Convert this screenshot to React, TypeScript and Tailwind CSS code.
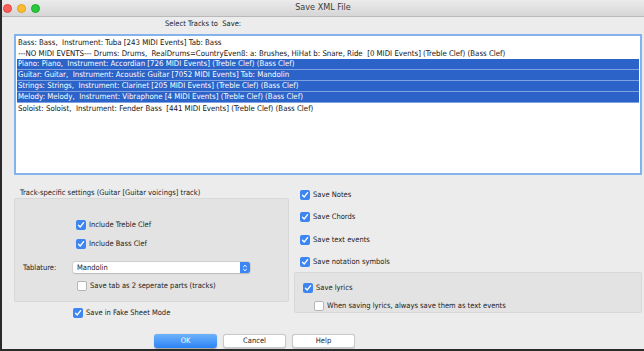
import React from "react"

const font = "font-['DejaVu_Sans_Condensed','Liberation_Sans',sans-serif]"

const rows = [
    { text: "Bass: Bass,  Instrument: Tuba [243 MIDI Events] Tab: Bass", sel: false },
    { text: "---NO MIDI EVENTS--- Drums: Drums,  RealDrums=CountryEven8: a: Brushes, HiHat b: Snare, Ride  [0 MIDI Events] (Treble Clef) (Bass Clef)", sel: false },
    { text: "Piano: Piano,  Instrument: Accordian [726 MIDI Events] (Treble Clef) (Bass Clef)", sel: true },
    { text: "Guitar: Guitar,  Instrument: Acoustic Guitar [7052 MIDI Events] Tab: Mandolin", sel: true },
    { text: "Strings: Strings,  Instrument: Clarinet [205 MIDI Events] (Treble Clef) (Bass Clef)", sel: true },
    { text: "Melody: Melody,  Instrument: Vibraphone [4 MIDI Events] (Treble Clef) (Bass Clef)", sel: true },
    { text: "Soloist: Soloist,  Instrument: Fender Bass  [441 MIDI Events] (Treble Clef) (Bass Clef)", sel: false },
]

const Check = ({ checked }: { checked: boolean }) => {
    if (!checked) {
        return <span className="w-[10px] h-[10px] rounded-[2px] bg-white border border-[#b5b5b5] shrink-0" />
    }
    return (
        <span className="w-[10px] h-[10px] rounded-[2px] bg-[#3d86f2] flex items-center justify-center shrink-0">
            <svg width="8" height="8" viewBox="0 0 8 8">
                <path d="M1.5 4.2 L3.2 6 L6.6 1.6" stroke="white" strokeWidth="1.3" fill="none" strokeLinecap="round" strokeLinejoin="round" />
            </svg>
        </span>
    )
}

const CheckRow = ({ checked, label, className = "" }: { checked: boolean, label: string, className?: string }) => (
    <div className={`flex items-center gap-[3px] h-[12px] text-[7.5px] text-[#222] ${className}`}>
        <Check checked={checked} />
        <span>{label}</span>
    </div>
)

const Button = ({ label, primary }: { label: string, primary?: boolean }) => (
    <button className={primary
        ? "w-[63px] h-[14px] rounded-[3px] bg-gradient-to-b from-[#6db2fb] to-[#2b83f6] text-white text-[7.5px] shadow-[0_0.5px_1px_rgba(0,0,0,0.3)]"
        : "w-[63px] h-[14px] rounded-[3px] bg-white border border-[#c9c9c9] text-[#222] text-[7.5px] shadow-[0_0.5px_1px_rgba(0,0,0,0.15)]"}>
        {label}
    </button>
)

export default function App() {
    return (
        <div className={`w-[644px] h-[351px] bg-[#ececec] flex flex-col overflow-hidden border-l-2 border-b-2 border-[#2a2a2a] ${font}`}>
            <div className="h-[17px] shrink-0 bg-gradient-to-b from-[#ebebeb] to-[#d6d6d6] border-b border-[#b9b9b9] flex items-center relative">
                <div className="flex gap-[5px] pl-[1px]">
                    <span className="w-[9px] h-[9px] rounded-full bg-[#fc5f57] border border-[#e0443e]" />
                    <span className="w-[9px] h-[9px] rounded-full bg-[#fdbc2e] border border-[#dea123]" />
                    <span className="w-[9px] h-[9px] rounded-full bg-[#29c840] border border-[#1aab29]" />
                </div>
                <div className="absolute inset-0 flex items-center justify-center text-[9px] text-[#3a3a3a]">Save XML File</div>
            </div>

            <div className="h-[11px] mt-[1px] pl-[163px] text-[7.5px] text-[#222] whitespace-pre flex items-center">Select Tracks to  Save:</div>

            <div className="ml-[12px] mt-[5px] w-[628px] h-[141px] bg-white border-2 border-[#84b2ec] pt-[1px] px-[1px] flex flex-col">
                {rows.map((r, i) => (
                    <div key={i} className={`h-[11px] px-[1px] flex items-center whitespace-pre text-[7.8px] ${r.sel ? "bg-[#2b63c8] text-white border-b border-[#7ea3e4]" : "text-[#111]"}`}>
                        {r.text}
                    </div>
                ))}
            </div>

            <div className="h-[159px] flex">
                <div className="w-[275px] ml-[12px] flex flex-col">
                    <div className="mt-[13px] h-[10px] pl-[6px] text-[7.5px] text-[#222] flex items-center">Track-specific settings (Guitar [Guitar voicings] track)</div>
                    <div className="h-[104px] bg-[#e3e3e3] border border-[#d8d8d8] rounded-[2px] flex flex-col pt-[20px]">
                        <CheckRow checked label="Include Treble Clef" className="ml-[61px]" />
                        <CheckRow checked label="Include Bass Clef" className="ml-[61px] mt-[7px]" />
                        <div className="flex items-center mt-[12px] h-[11px]">
                            <span className="w-[58px] pl-[8px] text-[7.5px] text-[#222]">Tablature:</span>
                            <div className="w-[177px] h-[11px] bg-white rounded-[2px] shadow-[0_0_0_0.5px_#c2c2c2,0_0.5px_1px_rgba(0,0,0,0.2)] flex items-center justify-between pl-[4px]">
                                <span className="text-[7.5px] text-[#222]">Mandolin</span>
                                <span className="w-[10px] h-[11px] rounded-r-[2px] bg-[#3c86f3] flex items-center justify-center">
                                    <svg width="6" height="8" viewBox="0 0 6 8">
                                        <path d="M1.2 3 L3 1.3 L4.8 3 M1.2 5 L3 6.7 L4.8 5" stroke="white" strokeWidth="1" fill="none" />
                                    </svg>
                                </span>
                            </div>
                        </div>
                        <CheckRow checked={false} label="Save tab as 2 seperate parts (tracks)" className="ml-[62px] mt-[7px]" />
                    </div>
                    <CheckRow checked label="Save in Fake Sheet Mode" className="ml-[59px] mt-[5px]" />
                </div>

                <div className="flex-1 ml-[5px] mr-[2px] flex flex-col">
                    <CheckRow checked label="Save Notes" className="ml-[6px] mt-[14px]" />
                    <CheckRow checked label="Save Chords" className="ml-[6px] mt-[10px]" />
                    <CheckRow checked label="Save text events" className="ml-[6px] mt-[11px]" />
                    <CheckRow checked label="Save notation symbols" className="ml-[6px] mt-[10px]" />
                    <div className="mt-[4px] h-[41px] bg-[#e3e3e3] border border-[#d8d8d8] rounded-[2px] flex flex-col pt-[9px]">
                        <CheckRow checked label="Save lyrics" className="ml-[8px]" />
                        <CheckRow checked={false} label="When saving lyrics, always save them as text events" className="ml-[19px] mt-[6px]" />
                    </div>
                </div>
            </div>

            <div className="flex gap-[6px] pl-[152px]">
                <Button label="OK" primary />
                <Button label="Cancel" />
                <Button label="Help" />
            </div>
        </div>
    )
}
